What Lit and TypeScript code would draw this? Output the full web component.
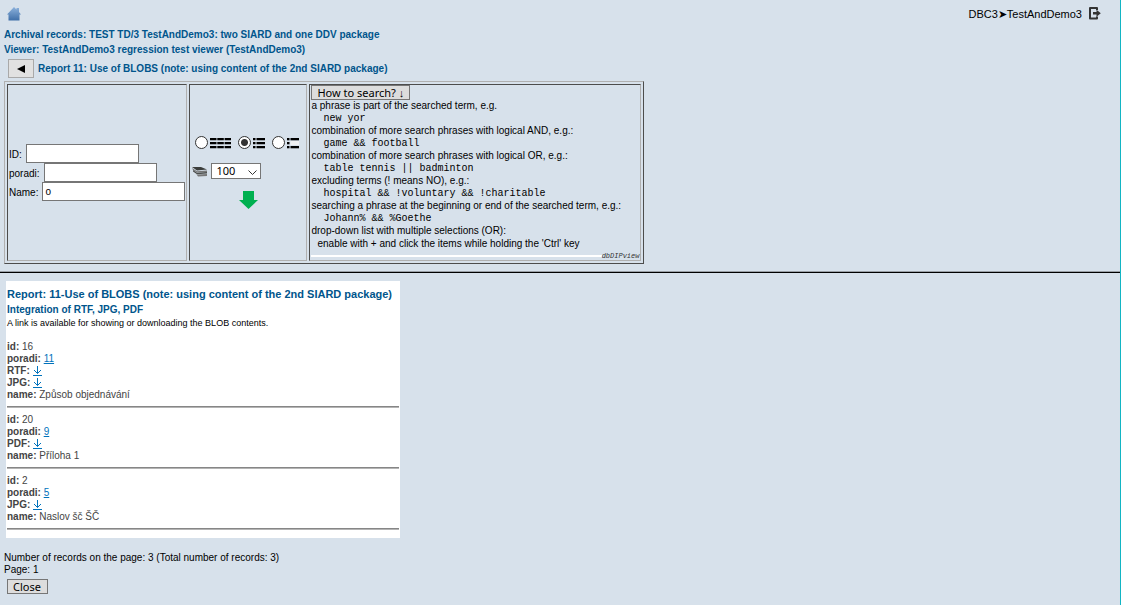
import { LitElement, html, css, svg } from "lit";
import { customElement, property, state } from "lit/decorators.js";

interface Field {
  label: string;
  value?: string;
  link?: string;
}

const records: Field[][] = [
  [
    { label: "id", value: "16" },
    { label: "poradi", link: "11" },
    { label: "RTF", link: "" },
    { label: "JPG", link: "" },
    { label: "name", value: "Způsob objednávání" },
  ],
  [
    { label: "id", value: "20" },
    { label: "poradi", link: "9" },
    { label: "PDF", link: "" },
    { label: "name", value: "Příloha 1" },
  ],
  [
    { label: "id", value: "2" },
    { label: "poradi", link: "5" },
    { label: "JPG", link: "" },
    { label: "name", value: "Naslov šč ŠČ" },
  ],
];

const helpItems = [
  ["a phrase is part of the searched term, e.g.", "new yor"],
  ["combination of more search phrases with logical AND, e.g.:", "game && football"],
  ["combination of more search phrases with logical OR, e.g.:", "table tennis || badminton"],
  ["excluding terms (! means NO), e.g.:", "hospital && !voluntary && !charitable"],
  ["searching a phrase at the beginning or end of the searched term, e.g.:", "Johann% && %Goethe"],
];

@customElement("search-panel")
class SearchPanel extends LitElement {
  @state() mode = "list";

  static styles = css`
    :host {
      display: block;
      width: max-content;
    }
    .panel {
      display: flex;
      gap: 2px;
      padding: 2px;
      border: 1px solid;
      border-color: #b0b0b0 #4c4c4c #4c4c4c #b0b0b0;
    }
    .cell {
      display: flex;
      flex-direction: column;
      justify-content: center;
      border: 1px solid;
      border-color: #4c4c4c #b0b0b0 #b0b0b0 #4c4c4c;
      padding: 0 1px;
      box-sizing: border-box;
    }
    .row {
      display: flex;
      align-items: center;
      gap: 4px;
      height: 19px;
    }
    .row label {
      padding-top: 2px;
    }
    input.text {
      box-sizing: border-box;
      width: 113px;
      height: 19px;
      border: 1px solid #767676;
      background: #fff;
      padding: 1px 2px;
      font: 10px "Liberation Sans", Arial, sans-serif;
      color: #000;
    }
    input.wide {
      width: 143px;
    }
    .options {
      width: 118px;
      align-items: center;
    }
    .modes {
      display: flex;
      align-items: center;
      gap: 7px;
      padding-right: 3px;
    }
    .mode {
      display: flex;
      align-items: center;
      gap: 2px;
    }
    .mode svg,
    .limit svg,
    .go svg {
      display: block;
    }
    .mode svg {
      margin-top: 2px;
    }
    input.radio {
      appearance: none;
      width: 13px;
      height: 13px;
      margin: 0;
      border: 1px solid #333;
      border-radius: 50%;
      background: #fff;
    }
    input.radio:checked {
      background: radial-gradient(circle, #333 0 3px, #fff 4px);
    }
    .limit {
      display: flex;
      align-items: center;
      align-self: stretch;
      gap: 3px;
      margin: 14px 0 12px;
      padding-left: 1px;
    }
    .select {
      display: grid;
      align-items: center;
      justify-items: end;
    }
    .select > * {
      grid-area: 1 / 1;
    }
    .select svg {
      margin: 4px 3px 0 0;
      pointer-events: none;
    }
    select {
      appearance: none;
      box-sizing: border-box;
      width: 50px;
      height: 16px;
      border: 1px solid #767676;
      border-radius: 0;
      background: #fff;
      padding: 0 4px;
      font: 11px/14px "Noto Sans", sans-serif;
      color: #000;
    }
    .go {
      border: 0;
      padding: 0;
      background: none;
    }
    .help {
      min-width: 332px;
      justify-content: flex-start;
    }
    .toggle {
      align-self: flex-start;
      box-sizing: border-box;
      height: 15px;
      border: 1px solid #767676;
      padding: 0 5px;
      background: #ddd;
      font: 11px/13px "Noto Sans", sans-serif;
      color: #000;
    }
    dl {
      margin: 0;
    }
    dt {
      height: 13px;
      line-height: 12px;
    }
    dd {
      margin: 0 0 0 12px;
      height: 12px;
      font: 10px/12px "Liberation Mono", monospace;
    }
    dd.plain {
      margin-left: 6px;
      font-family: "Liberation Sans", Arial, sans-serif;
    }
    .footer {
      display: flex;
      align-items: center;
      margin-top: 2px;
      height: 8px;
      color: #333;
    }
    .line {
      flex: 1;
      height: 2px;
      background: #fff;
    }
    .brand {
      font: italic 7px/8px "Liberation Mono", monospace;
    }
  `;

  private modeIcon(kind: string) {
    const rows = [0, 4, 8];
    const width = kind === "table" ? 21 : 12;
    return html`<svg width=${width} height="11" viewBox="0 0 ${width} 11" aria-hidden="true">
      ${rows.map((y) =>
        kind === "table"
          ? svg`<path d="M0 ${y}h6.500v2.300h-6.500zM7.300 ${y}h6.500v2.300h-6.500zM14.600 ${y}h6.400v2.300h-6.400z" />`
          : kind === "list"
            ? svg`<path d="M0 ${y}h2.500v2.300h-2.500zM3.500 ${y}h8.500v2.300h-8.500z" />`
            : svg`<path d="M0 ${y}h2.500v2.300h-2.500z" />${
                y === 4
                  ? svg`<path d="M3.500 3h8.500v4h-8.500z" fill="#eef0f2" />`
                  : svg`<path d="M3.500 ${y}h8.500v2.300h-8.500z" />`
              }`,
      )}
    </svg>`;
  }

  render() {
    return html`
      <form class="panel" @submit=${(e: Event) => e.preventDefault()}>
        <div class="cell">
          <div class="row"><label for="id">ID:</label><input class="text" id="id" type="text" /></div>
          <div class="row"><label for="poradi">poradi:</label><input class="text" id="poradi" type="text" /></div>
          <div class="row"><label for="name">Name:</label><input class="text wide" id="name" type="text" value="o" /></div>
        </div>
        <div class="cell options">
          <div class="modes">
            ${["table", "list", "compact"].map(
              (m) => html`<label class="mode">
                <input class="radio" type="radio" name="mode" aria-label=${m} .checked=${this.mode === m}
                  @change=${() => (this.mode = m)} />${this.modeIcon(m)}
              </label>`,
            )}
          </div>
          <div class="limit">
            <svg width="16" height="11" viewBox="0 0 16 11" aria-hidden="true">
              <path d="M0 1L9 1L15 3.500L5 4.500Z" fill="#3c3e3c" />
              <path d="M0 2L5 5.200L15 4.500V6L5 6.500L1 4Z" fill="#777" />
              <path d="M1 4L5 6.800L15 6V7.500L5 8.300L1 5.500Z" fill="#4c4e4c" />
              <path d="M4 7.500L5 8.600L15 8V10L6 10.500Z" fill="#777" />
            </svg>
            <div class="select">
              <select aria-label="Records per page">
                <option>10</option>
                <option selected>100</option>
              </select>
              <svg width="11" height="6" viewBox="0 0 11 6" aria-hidden="true">
                <path d="M1.500 .5L5.500 4.500L9.500 .5" fill="none" stroke="#333" />
              </svg>
            </div>
          </div>
          <button class="go" type="submit" aria-label="Search">
            <svg width="19" height="18" viewBox="0 0 19 18"><path d="M4 0H15V9H19L9.500 18L0 9H4Z" fill="#00b050" /></svg>
          </button>
        </div>
        <div class="cell help">
          <button class="toggle" type="button">How to search? ↓</button>
          <dl>
            ${helpItems.map(([text, sample]) => html`<dt>${text}</dt><dd>${sample}</dd>`)}
            <dt>drop-down list with multiple selections (OR):</dt>
            <dd class="plain">enable with + and click the items while holding the 'Ctrl' key</dd>
          </dl>
          <div class="footer"><span class="line"></span><span class="brand">dbDIPview</span></div>
        </div>
      </form>
    `;
  }
}

@customElement("record-item")
class RecordItem extends LitElement {
  @property({ attribute: false }) fields: Field[] = [];

  static styles = css`
    :host {
      display: block;
      margin-bottom: 6px;
      color: #444;
    }
    .field {
      height: 12px;
      line-height: 12px;
    }
    .label {
      font-weight: bold;
    }
    a {
      color: #0072bc;
    }
    svg {
      vertical-align: -2px;
      border-bottom: 1px solid;
    }
    hr {
      margin: 5px 0 0;
      border: 0;
      border-top: 1px solid #868686;
      border-bottom: 1px solid #b4b4b4;
    }
  `;

  render() {
    return html`${this.fields.map(
        (f) => html`<div class="field">
          <span class="label">${f.label}:</span>
          ${f.link === undefined
            ? f.value
            : f.link
              ? html`<a href="#">${f.link}</a>`
              : html`<a href="#" aria-label="Download ${f.label}"
                  ><svg width="9" height="9" viewBox="0 0 9 9"><path d="M4.500 0V7.500M1 4L4.500 7.500L8 4" fill="none" stroke="currentColor" /></svg
                ></a>`}
        </div>`,
      )}
      <hr />`;
  }
}

@customElement("app-root")
class AppRoot extends LitElement {
  static styles = css`
    :host {
      display: block;
      box-sizing: border-box;
      min-height: 100vh;
      border-right: 1px solid #12b5c4;
      background: #d7e1eb;
      color: #000;
      font: 10px/12px "Liberation Sans", Arial, sans-serif;
    }
    .top {
      display: flex;
      justify-content: space-between;
      align-items: flex-start;
      height: 20px;
      padding: 7px 19px 0 7px;
    }
    .top svg {
      display: block;
    }
    .user {
      display: flex;
      align-items: center;
      gap: 7px;
      font-size: 11px;
    }
    h1,
    h2,
    h3 {
      margin: 0;
      font-size: 10px;
      line-height: 15px;
      color: #00558c;
    }
    .titles {
      padding-left: 4px;
    }
    .report {
      display: flex;
      align-items: center;
      gap: 4px;
      padding: 2px 0 3px 4px;
    }
    .back {
      display: grid;
      place-items: center;
      box-sizing: border-box;
      width: 26px;
      height: 19px;
      padding: 0;
      border: 1px solid #a9a9a9;
      background: #e1e1e1;
    }
    search-panel {
      margin-left: 4px;
    }
    .rule {
      border: 0;
      border-top: 1px solid #9aa0a6;
      border-bottom: 1px solid #000;
      margin: 7px 0 8px;
    }
    .results {
      box-sizing: border-box;
      width: max-content;
      min-width: 394px;
      margin-left: 6px;
      padding: 6px 1px 2px;
      background: #fff;
    }
    .results h2 {
      font-size: 11px;
    }
    .note {
      margin: 0 0 12px;
      font-size: 9px;
    }
    .summary {
      padding: 14px 4px 0;
    }
    .close {
      display: block;
      box-sizing: border-box;
      height: 15px;
      margin: 3px 0 0 3px;
      padding: 0 6px 0 5px;
      border: 1px solid #767676;
      background: #ddd;
      font: 11px/13px "Noto Sans", sans-serif;
      color: #000;
    }
  `;

  render() {
    return html`
      <header class="top">
        <a href="#" aria-label="Home">
          <svg width="14" height="14" viewBox="0 0 14 14">
            <defs>
              <linearGradient id="roof" x2="0" y2="1">
                <stop stop-color="#8db2dc" />
                <stop offset="1" stop-color="#3f6fa8" />
              </linearGradient>
            </defs>
            <path d="M7 0L9.500 2.500V1H12V5L14 7.500H12.500V13.500H1.500V7.500H0Z" fill="url(#roof)" />
          </svg>
        </a>
        <div class="user">
          <span>DBC3➤TestAndDemo3</span>
          <a href="#" aria-label="Log out">
            <svg width="12" height="13" viewBox="0 0 12 13">
              <path d="M8 3V1H1V11.500H8V9.500" fill="none" stroke="#333" stroke-width="2" stroke-linejoin="round" />
              <path d="M4 5H7.500V2.800L11.800 6.200L7.500 9.700V7.500H4Z" fill="#333" />
            </svg>
          </a>
        </div>
      </header>
      <div class="titles">
        <h1>Archival records: TEST TD/3 TestAndDemo3: two SIARD and one DDV package</h1>
        <h1>Viewer: TestAndDemo3 regression test viewer (TestAndDemo3)</h1>
        <div class="report">
          <button class="back" aria-label="Back">
            <svg width="8" height="8" viewBox="0 0 8 8"><path d="M8 0V8L0 4Z" /></svg>
          </button>
          <h1>Report 11: Use of BLOBS (note: using content of the 2nd SIARD package)</h1>
        </div>
      </div>
      <search-panel></search-panel>
      <hr class="rule" />
      <main class="results">
        <h2>Report: 11-Use of BLOBS (note: using content of the 2nd SIARD package)</h2>
        <h3>Integration of RTF, JPG, PDF</h3>
        <p class="note">A link is available for showing or downloading the BLOB contents.</p>
        ${records.map((r) => html`<record-item .fields=${r}></record-item>`)}
      </main>
      <footer class="summary">
        <div>Number of records on the page: 3 (Total number of records: 3)</div>
        <div>Page: 1</div>
        <button class="close">Close</button>
      </footer>
    `;
  }
}
